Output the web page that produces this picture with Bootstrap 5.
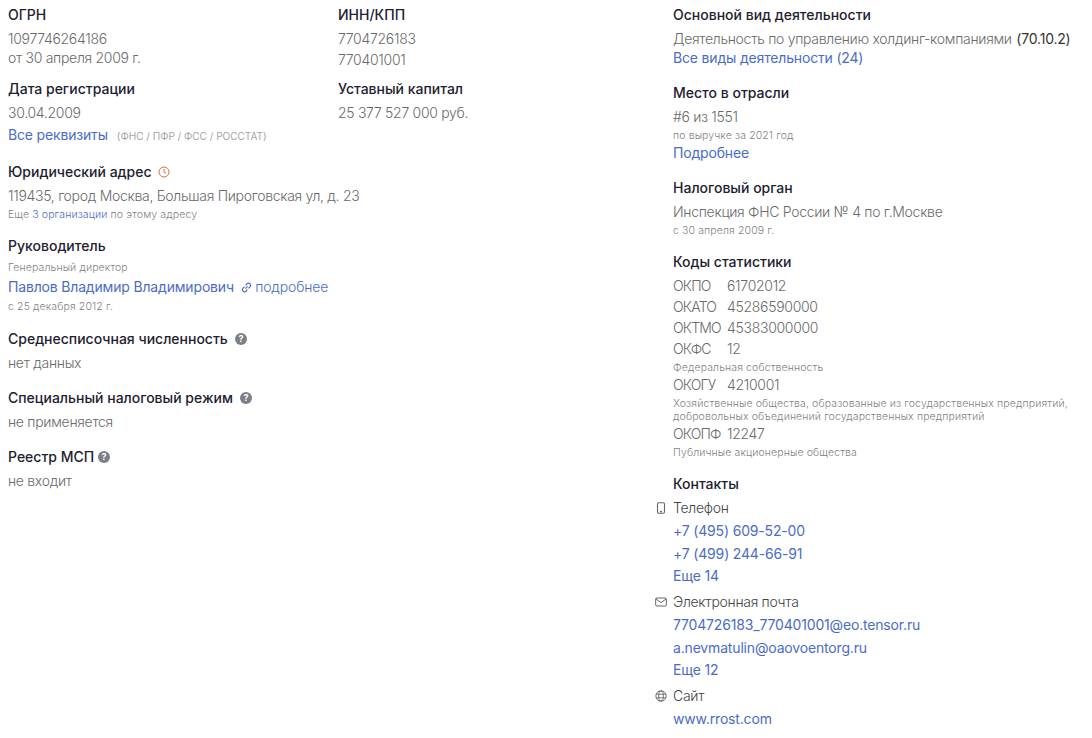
<!DOCTYPE html>
<html lang="ru">
<head>
<meta charset="utf-8">
<title>Реквизиты</title>
<link href="https://cdn.jsdelivr.net/npm/bootstrap@5.3.0/dist/css/bootstrap.min.css" rel="stylesheet">
<style>
body{background:#fff;font-family:Inter,"Noto Sans",sans-serif;font-size:14px;line-height:20px;color:#6a6a6a;font-weight:300;letter-spacing:-.3px}
a{color:#4a6cc8;text-decoration:none;font-weight:400;letter-spacing:-.17px}
.page-wrap{padding:5px 0 0 8px;height:738px;overflow:hidden}
.left-pane{width:629px;flex:none}
.right-pane{padding-left:36px;width:455px;flex:none;white-space:nowrap}
.req-col{width:330px;flex:none}
.ttl{color:#1d2130;font-weight:500;line-height:20px;margin-bottom:4px;display:flex;align-items:center;letter-spacing:0}
.val{line-height:20px}
.tight{line-height:19px}
.sub{font-size:10.5px;line-height:14px;color:#7f7f7f;letter-spacing:.12px}
.sub a{font-weight:300;letter-spacing:.12px}
.sub-one{padding-top:1px;margin-bottom:-1px}
.sub-lift{padding-top:1px}
.sub-shift{padding-top:2px;margin-bottom:-1px}
.sub-flush{padding-top:2px}
.gap-a{margin-bottom:15px}
.gap-b{margin-bottom:11px}
.gap-c{margin-bottom:9px}
.gap-d{margin-bottom:16px}
.val-gap{margin-top:1px}
.row-gap{margin-top:2px}
.name-row{margin:3px 0 2px}
.note{font-size:10px;color:#a4a4a4;margin-left:9px;font-weight:400;letter-spacing:0}
.dark{color:#333;font-weight:400;letter-spacing:-.2px;margin-left:1px}
.code-row{display:flex;margin-bottom:1px}
.code-row>span:first-child{width:54px;flex:none;letter-spacing:-.8px}
.code-row.flush{margin-bottom:0}
.sub-tight{line-height:13px;padding:2px 0 1px}
.q-icon{width:12px;height:12px;margin-left:7px;flex:none}
.q-tight{margin-left:4px}
.clock-icon{width:12px;height:12px;margin-left:6px;flex:none}
.chain-icon{width:13px;height:13px;margin-left:2px;vertical-align:-2px}
.more-link{font-weight:300;letter-spacing:-.15px;margin-left:-1px}
.ct-head{position:relative;color:#444;font-weight:300;line-height:20px;margin-bottom:3px}
.ct-head svg{position:absolute;left:-18px;top:4px;width:12px;height:12px}
.ct-link{line-height:20px;margin-bottom:3px}
.ct-tight{margin-bottom:2px}
.ct-more{line-height:20px;margin-bottom:6px}
</style>
</head>
<body>
<div class="page-wrap d-flex">
  <div class="left-pane">
    <div class="d-flex">
      <div class="req-col">
        <div class="ttl">ОГРН</div>
        <div class="val tight">1097746264186</div>
        <div class="val gap-b">от 30 апреля 2009 г.</div>
        <div class="ttl">Дата регистрации</div>
        <div class="val">30.04.2009</div>
      </div>
      <div>
        <div class="ttl">ИНН/КПП</div>
        <div class="val">7704726183</div>
        <div class="val val-gap gap-c">770401001</div>
        <div class="ttl">Уставный капитал</div>
        <div class="val">25 377 527 000 руб.</div>
      </div>
    </div>
    <div class="val row-gap gap-d"><a href="#">Все реквизиты</a><span class="note">(ФНС / ПФР / ФСС / РОССТАТ)</span></div>

    <div class="gap-a">
      <div class="ttl">Юридический адрес
        <svg class="clock-icon" viewBox="0 0 12 12" fill="none" stroke="#c9763f" stroke-width="1"><circle cx="6" cy="6" r="5"/><path d="M6 3v3.2l2 1"/></svg>
      </div>
      <div class="val">119435, город Москва, Большая Пироговская ул, д. 23</div>
      <div class="sub sub-shift">Еще <a href="#">3 организации</a> по этому адресу</div>
    </div>

    <div class="gap-a">
      <div class="ttl">Руководитель</div>
      <div class="sub sub-one">Генеральный директор</div>
      <div class="val name-row"><a href="#">Павлов Владимир Владимирович</a>
        <svg class="chain-icon" viewBox="0 0 12 12" fill="none" stroke="#4a6cc8" stroke-width="1.1"><path d="M5 7l2-2"/><path d="M4.2 5.2 2.6 6.8a2 2 0 0 0 2.8 2.8l1.4-1.6"/><path d="M7.8 6.8l1.6-1.6a2 2 0 0 0-2.8-2.8L5.2 4"/></svg>
        <a href="#" class="more-link">подробнее</a></div>
      <div class="sub sub-lift">с 25 декабря 2012 г.</div>
    </div>

    <div class="gap-a">
      <div class="ttl">Среднесписочная численность
        <svg class="q-icon" viewBox="0 0 12 12"><circle cx="6" cy="6" r="6" fill="#7d7f88"/><text x="6" y="9.2" font-size="9" font-weight="700" fill="#fff" text-anchor="middle" font-family="Inter,sans-serif">?</text></svg>
      </div>
      <div class="val">нет данных</div>
    </div>
    <div class="gap-a">
      <div class="ttl">Специальный налоговый режим
        <svg class="q-icon" viewBox="0 0 12 12"><circle cx="6" cy="6" r="6" fill="#7d7f88"/><text x="6" y="9.2" font-size="9" font-weight="700" fill="#fff" text-anchor="middle" font-family="Inter,sans-serif">?</text></svg>
      </div>
      <div class="val">не применяется</div>
    </div>
    <div class="gap-a">
      <div class="ttl">Реестр МСП
        <svg class="q-icon q-tight" viewBox="0 0 12 12"><circle cx="6" cy="6" r="6" fill="#7d7f88"/><text x="6" y="9.2" font-size="9" font-weight="700" fill="#fff" text-anchor="middle" font-family="Inter,sans-serif">?</text></svg>
      </div>
      <div class="val">не входит</div>
    </div>
  </div>

  <div class="right-pane">
    <div class="gap-a">
      <div class="ttl">Основной вид деятельности</div>
      <div class="val tight">Деятельность по управлению холдинг-компаниями <span class="dark">(70.10.2)</span></div>
      <div class="val"><a href="#">Все виды деятельности (24)</a></div>
    </div>
    <div class="gap-a">
      <div class="ttl">Место в отрасли</div>
      <div class="val">#6 из 1551</div>
      <div class="sub sub-shift">по выручке за 2021 год</div>
      <div class="val val-gap"><a href="#">Подробнее</a></div>
    </div>
    <div class="gap-a">
      <div class="ttl">Налоговый орган</div>
      <div class="val">Инспекция ФНС России № 4 по г.Москве</div>
      <div class="sub sub-shift">с 30 апреля 2009 г.</div>
    </div>
    <div class="gap-a">
      <div class="ttl">Коды статистики</div>
      <div class="code-row"><span>ОКПО</span><span>61702012</span></div>
      <div class="code-row"><span>ОКАТО</span><span>45286590000</span></div>
      <div class="code-row"><span>ОКТМО</span><span>45383000000</span></div>
      <div class="code-row flush"><span>ОКФС</span><span>12</span></div>
      <div class="sub sub-flush">Федеральная собственность</div>
      <div class="code-row flush"><span>ОКОГУ</span><span>4210001</span></div>
      <div class="sub sub-tight">Хозяйственные общества, образованные из государственных предприятий,<br>добровольных объединений государственных предприятий</div>
      <div class="code-row flush"><span>ОКОПФ</span><span>12247</span></div>
      <div class="sub sub-shift">Публичные акционерные общества</div>
    </div>
    <div class="ttl">Контакты</div>
    <div class="ct-head">
      <svg viewBox="0 0 12 12" fill="none" stroke="#666" stroke-width="1.1"><rect x="2.5" y=".8" width="7" height="10.4" rx="1.2"/><path d="M5 9.6h2"/></svg>
      Телефон</div>
    <div class="ct-link"><a href="#">+7 (495) 609-52-00</a></div>
    <div class="ct-link ct-tight"><a href="#">+7 (499) 244-66-91</a></div>
    <div class="ct-more"><a href="#">Еще 14</a></div>
    <div class="ct-head">
      <svg viewBox="0 0 12 12" fill="none" stroke="#666" stroke-width="1"><rect x=".7" y="2" width="10.6" height="8" rx="1"/><path d="M1 3l5 3.6L11 3"/></svg>
      Электронная почта</div>
    <div class="ct-link"><a href="#">7704726183_770401001@eo.tensor.ru</a></div>
    <div class="ct-link ct-tight"><a href="#">a.nevmatulin@oaovoentorg.ru</a></div>
    <div class="ct-more"><a href="#">Еще 12</a></div>
    <div class="ct-head">
      <svg viewBox="0 0 12 12" fill="none" stroke="#666" stroke-width=".9"><circle cx="6" cy="6" r="5.2"/><ellipse cx="6" cy="6" rx="2.3" ry="5.2"/><path d="M1 4.2h10M1 7.8h10"/></svg>
      Сайт</div>
    <div class="ct-link"><a href="#">www.rrost.com</a></div>
  </div>
</div>
<script src="https://cdn.jsdelivr.net/npm/bootstrap@5.3.0/dist/js/bootstrap.bundle.min.js"></script>
</body>
</html>
